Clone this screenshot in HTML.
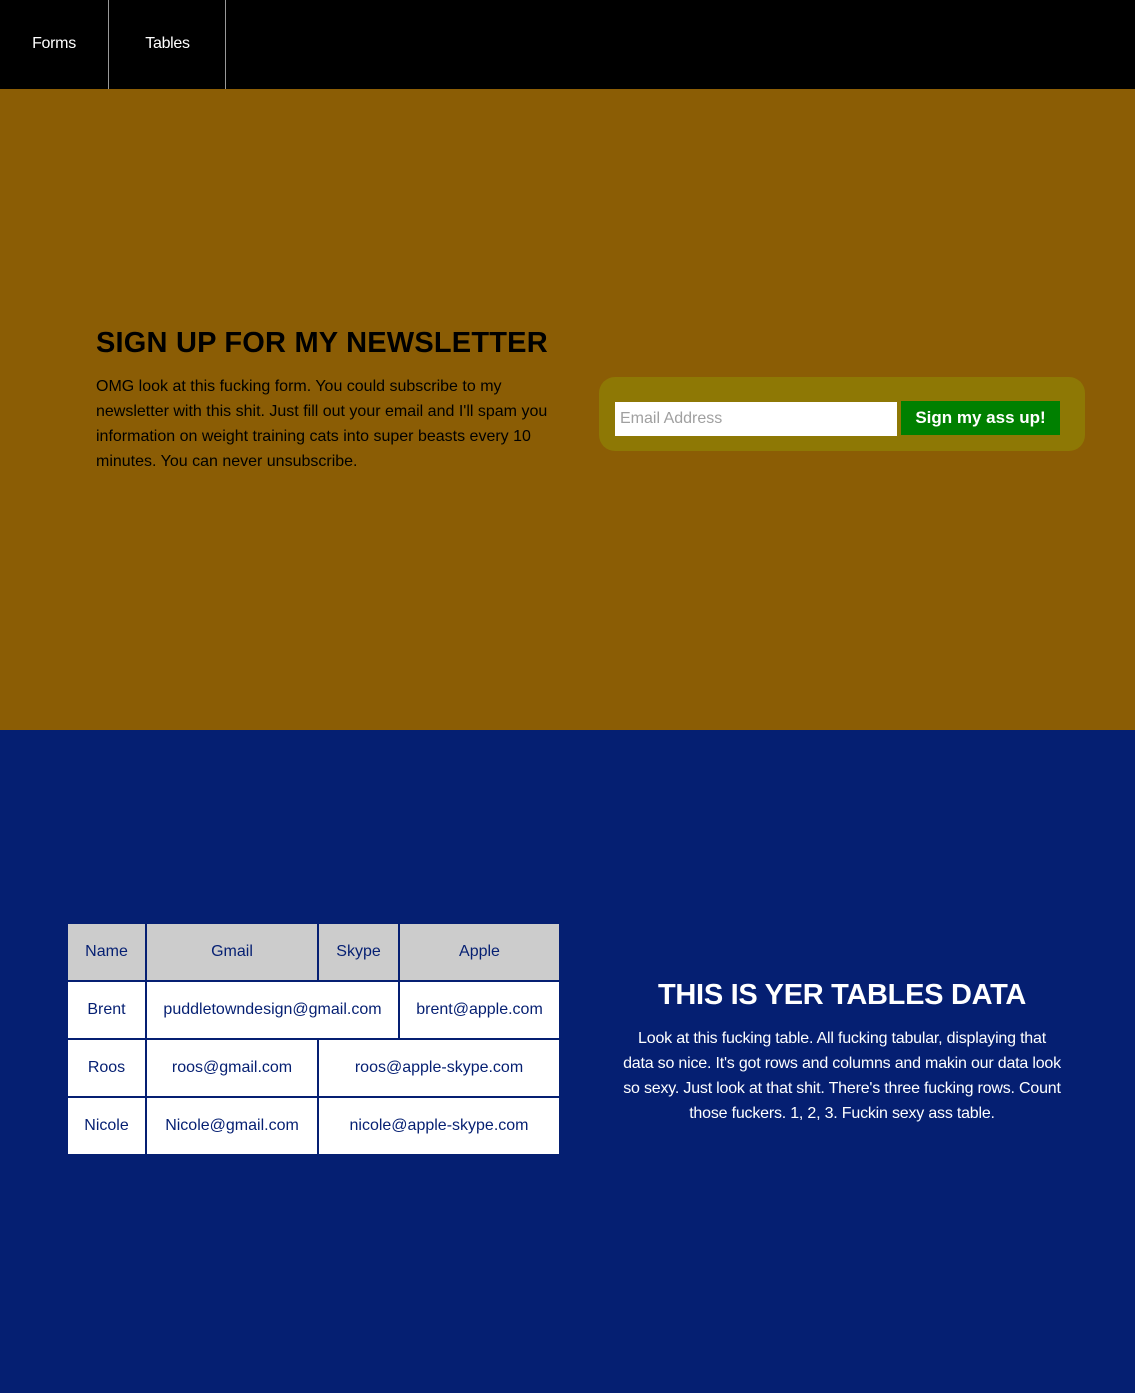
<!DOCTYPE html>
<html><head><style>
*{margin:0;padding:0;box-sizing:border-box}
body{width:1135px;height:1393px;position:relative;font-family:"Liberation Sans",Arial,sans-serif;background:#051f72;overflow:hidden}
.a{position:absolute}
.nav{left:0;top:0;width:1135px;height:89px;background:#000}
.nv{top:0;height:89px;line-height:87px;color:#fff;font-size:16px;text-align:center;letter-spacing:-0.3px}
.gold{left:0;top:89px;width:1135px;height:641px;background:#8b5d05}
.c{position:absolute;background:#fff;color:#051f72;font-size:16px;display:flex;align-items:center;justify-content:center}
.h{background:#cccccc}
</style></head><body>
<div class="a nav"></div>
<div class="a nv" style="left:0;width:109px;border-right:1px solid #999">Forms</div>
<div class="a nv" style="left:110px;width:116px;border-right:1px solid #999">Tables</div>
<div class="a gold"></div>
<div class="a" style="left:96px;top:327px;font-size:29px;font-weight:bold;color:#000;letter-spacing:0.2px">SIGN UP FOR MY NEWSLETTER</div>
<div class="a" style="left:96px;top:374px;width:465px;font-size:16px;line-height:25px;color:#000">OMG look at this fucking form. You could subscribe to my newsletter with this shit. Just fill out your email and I'll spam you information on weight training cats into super beasts every 10 minutes. You can never unsubscribe.</div>
<div class="a" style="left:599px;top:377px;width:486px;height:74px;background:#8e7805;border-radius:16px"></div>
<div class="a" style="left:615px;top:402px;width:282px;height:34px;background:#fff;color:#a0a0a0;font-size:16px;line-height:34px;padding-left:5px">Email Address</div>
<div class="a" style="left:901px;top:401px;width:159px;height:34px;background:#008000;color:#fff;font-size:17px;font-weight:bold;line-height:34px;text-align:center">Sign my ass up!</div>

<div class="a" style="left:68px;top:924px;width:491px;height:230px;background:#051f72"></div>
<div class="c h" style="left:68px;top:924px;width:77px;height:56px">Name</div>
<div class="c h" style="left:147px;top:924px;width:170px;height:56px">Gmail</div>
<div class="c h" style="left:319px;top:924px;width:79px;height:56px">Skype</div>
<div class="c h" style="left:400px;top:924px;width:159px;height:56px">Apple</div>
<div class="c" style="left:68px;top:982px;width:77px;height:56px">Brent</div>
<div class="c" style="left:147px;top:982px;width:251px;height:56px">puddletowndesign@gmail.com</div>
<div class="c" style="left:400px;top:982px;width:159px;height:56px">brent@apple.com</div>
<div class="c" style="left:68px;top:1040px;width:77px;height:56px">Roos</div>
<div class="c" style="left:147px;top:1040px;width:170px;height:56px">roos@gmail.com</div>
<div class="c" style="left:319px;top:1040px;width:240px;height:56px">roos@apple-skype.com</div>
<div class="c" style="left:68px;top:1098px;width:77px;height:56px">Nicole</div>
<div class="c" style="left:147px;top:1098px;width:170px;height:56px">Nicole@gmail.com</div>
<div class="c" style="left:319px;top:1098px;width:240px;height:56px">nicole@apple-skype.com</div>

<div class="a" style="left:600px;top:979px;width:484px;text-align:center;font-size:29px;font-weight:bold;color:#fff;letter-spacing:-0.3px">THIS IS YER TABLES DATA</div>
<div class="a" style="left:592px;top:1026px;width:500px;text-align:center;font-size:16px;line-height:25px;color:#fff;letter-spacing:-0.2px;white-space:nowrap">Look at this fucking table. All fucking tabular, displaying that<br>data so nice. It's got rows and columns and makin our data look<br>so sexy. Just look at that shit. There's three fucking rows. Count<br>those fuckers. 1, 2, 3. Fuckin sexy ass table.</div>
</body></html>
